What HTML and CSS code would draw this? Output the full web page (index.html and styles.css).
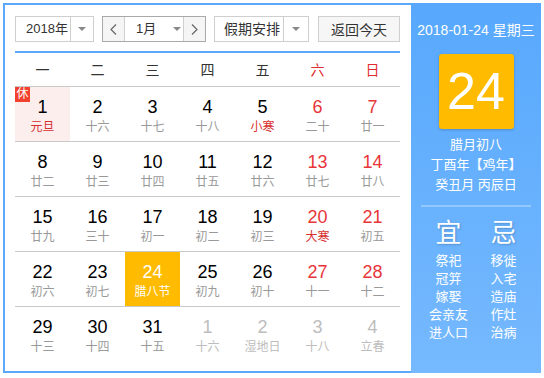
FILE: index.html
```html
<!DOCTYPE html>
<html lang="zh-CN">
<head>
  <meta charset="UTF-8">
  <meta name="viewport" content="width=device-width, initial-scale=1.0">
  <title>万年历</title>
  <link rel="stylesheet" href="styles.css">
</head>
<body>

  <div class="calendar">
    <div class="main">
      <div class="toolbar">
        <div class="select year-select">
          <span class="select-text">2018年</span>
          <span class="select-arrow"><i class="caret"></i></span>
        </div>
        <div class="month-group">
          <span class="nav-btn">
            <svg width="7" height="11" viewBox="0 0 7 11"><polyline points="6,0.5 1,5.5 6,10.5" fill="none" stroke="#666" stroke-width="1.2"/></svg>
          </span>
          <span class="month-text">1月</span>
          <span class="month-arrow"><i class="caret"></i></span>
          <span class="nav-btn next">
            <svg width="7" height="11" viewBox="0 0 7 11"><polyline points="1,0.5 6,5.5 1,10.5" fill="none" stroke="#666" stroke-width="1.2"/></svg>
          </span>
        </div>
        <div class="select holiday-select">
          <span class="select-text">假期安排</span>
          <span class="select-arrow"><i class="caret"></i></span>
        </div>
        <button type="button" class="today-button">返回今天</button>
      </div>

      <div class="weekdays">
        <span>一</span><span>二</span><span>三</span><span>四</span><span>五</span>
        <span class="weekend">六</span><span class="weekend">日</span>
      </div>

      <div class="days">
        <div class="week">
          <div class="day holiday"><span class="rest-badge">休</span><b>1</b><em class="festival">元旦</em></div>
          <div class="day"><b>2</b><em>十六</em></div>
          <div class="day"><b>3</b><em>十七</em></div>
          <div class="day"><b>4</b><em>十八</em></div>
          <div class="day"><b>5</b><em class="festival">小寒</em></div>
          <div class="day weekend"><b>6</b><em>二十</em></div>
          <div class="day weekend"><b>7</b><em>廿一</em></div>
        </div>
        <div class="week">
          <div class="day"><b>8</b><em>廿二</em></div>
          <div class="day"><b>9</b><em>廿三</em></div>
          <div class="day"><b>10</b><em>廿四</em></div>
          <div class="day"><b>11</b><em>廿五</em></div>
          <div class="day"><b>12</b><em>廿六</em></div>
          <div class="day weekend"><b>13</b><em>廿七</em></div>
          <div class="day weekend"><b>14</b><em>廿八</em></div>
        </div>
        <div class="week">
          <div class="day"><b>15</b><em>廿九</em></div>
          <div class="day"><b>16</b><em>三十</em></div>
          <div class="day"><b>17</b><em>初一</em></div>
          <div class="day"><b>18</b><em>初二</em></div>
          <div class="day"><b>19</b><em>初三</em></div>
          <div class="day weekend"><b>20</b><em class="festival">大寒</em></div>
          <div class="day weekend"><b>21</b><em>初五</em></div>
        </div>
        <div class="week">
          <div class="day"><b>22</b><em>初六</em></div>
          <div class="day"><b>23</b><em>初七</em></div>
          <div class="day today"><b>24</b><em>腊八节</em></div>
          <div class="day"><b>25</b><em>初九</em></div>
          <div class="day"><b>26</b><em>初十</em></div>
          <div class="day weekend"><b>27</b><em>十一</em></div>
          <div class="day weekend"><b>28</b><em>十二</em></div>
        </div>
        <div class="week">
          <div class="day"><b>29</b><em>十三</em></div>
          <div class="day"><b>30</b><em>十四</em></div>
          <div class="day"><b>31</b><em>十五</em></div>
          <div class="day other"><b>1</b><em>十六</em></div>
          <div class="day other"><b>2</b><em>湿地日</em></div>
          <div class="day other"><b>3</b><em>十八</em></div>
          <div class="day other"><b>4</b><em>立春</em></div>
        </div>
      </div>
    </div>

    <div class="side">
      <div class="side-date">2018-01-24 星期三</div>
      <div class="big-day">24</div>
      <div class="lunar">
        <p>腊月初八</p>
        <p>丁酉年【鸡年】</p>
        <p>癸丑月 丙辰日</p>
      </div>
      <div class="side-divider"></div>
      <div class="almanac">
        <div class="almanac-col">
          <h3>宜</h3>
          <p>祭祀</p>
          <p>冠笄</p>
          <p>嫁娶</p>
          <p>会亲友</p>
          <p>进人口</p>
        </div>
        <div class="almanac-col">
          <h3>忌</h3>
          <p>移徙</p>
          <p>入宅</p>
          <p>造庙</p>
          <p>作灶</p>
          <p>治病</p>
        </div>
      </div>
    </div>
  </div>

</body>
</html>
```

FILE: styles.css
```css
body {
  margin: 3px;
  font-family: "Liberation Sans", "Noto Sans CJK SC", sans-serif;
  color: #333;
}
.calendar {
  display: flex;
  width: 538px;
  height: 370px;
}
.main {
  width: 385px;
  padding: 11px 11px 0 10px;
  border: 2px solid #5aa7fc;
  border-right: none;
}

/* toolbar */
.toolbar {
  display: flex;
  height: 26px;
  padding-bottom: 9px;
  border-bottom: 2px solid #5aa7fc;
}
.select {
  display: flex;
  height: 24px;
  border: 1px solid #cfcfcf;
  background-color: #fff;
  font-size: 14px;
  line-height: 24px;
  white-space: nowrap;
}
.select-text {
  flex: 1;
  padding-left: 10px;
}
.select-arrow {
  display: flex;
  align-items: center;
  justify-content: center;
  width: 24px;
  border-left: 1px solid #cfcfcf;
}
.caret {
  width: 0;
  height: 0;
  border-left: 4px solid transparent;
  border-right: 4px solid transparent;
  border-top: 4px solid #888;
}
.year-select {
  width: 77px;
  font-size: 13px;
}
.year-select .select-arrow {
  width: 22px;
}
.month-group {
  display: flex;
  width: 102px;
  height: 24px;
  margin-left: 8px;
  border: 1px solid #a9a9a9;
  font-size: 13px;
  line-height: 24px;
  white-space: nowrap;
}
.nav-btn {
  display: flex;
  align-items: center;
  justify-content: center;
  width: 21px;
  background-color: #f5f5f5;
  border-right: 1px solid #cfcfcf;
}
.nav-btn.next {
  border-right: none;
  border-left: 1px solid #cfcfcf;
}
.month-text {
  width: 37px;
  padding-left: 11px;
}
.month-arrow {
  display: flex;
  align-items: center;
  width: 10px;
}
.holiday-select {
  width: 93px;
  margin-left: 8px;
}
.holiday-select .select-text {
  padding-left: 9px;
}
.today-button {
  width: 82px;
  height: 26px;
  margin-left: 9px;
  padding: 0;
  border: 1px solid #cfcfcf;
  border-radius: 0;
  background-color: #f6f6f6;
  font-family: inherit;
  font-size: 14px;
  color: #333;
}

/* weekday header */
.weekdays {
  display: grid;
  grid-template-columns: repeat(7, 55px);
  height: 33px;
  border-bottom: 1px solid #c9c9c9;
  font-size: 14px;
  line-height: 34px;
  text-align: center;
}
.weekdays .weekend {
  color: #e12d2d;
}

/* day grid */
.week {
  display: grid;
  grid-template-columns: repeat(7, 55px);
  border-bottom: 1px solid #c9c9c9;
}
.week:last-child {
  border-bottom: none;
}
.day {
  position: relative;
  height: 44px;
  padding-top: 10px;
  text-align: center;
}
.day b {
  display: block;
  font-size: 18px;
  font-weight: normal;
  line-height: 20px;
  color: #000;
}
.day em {
  display: block;
  font-style: normal;
  font-size: 12px;
  line-height: 20px;
  color: #999;
}
.day.weekend b {
  color: #e8353a;
}
.day em.festival {
  color: #d62f2f;
}
.day.holiday {
  background-color: #fdeeee;
}
.day.today {
  background-color: #ffbb00;
}
.day.today b,
.day.today em {
  color: #fff;
}
.day.other b,
.day.other em {
  color: #bdbdbd;
}
.rest-badge {
  position: absolute;
  top: 0;
  left: 0;
  width: 15px;
  height: 15px;
  background-color: #f2412f;
  color: #fff;
  font-size: 12px;
  line-height: 15px;
  text-align: center;
}

/* side panel */
.side {
  width: 130px;
  background: linear-gradient(#57a8fd, #76b9fe);
  color: #fff;
  text-align: center;
}
.side-date {
  margin-top: 17px;
  font-size: 14px;
  line-height: 20px;
}
.big-day {
  width: 75px;
  height: 75px;
  margin: 14px auto 0;
  border-radius: 3px;
  background-color: #ffbb00;
  box-shadow: 0 1px 3px rgba(0, 0, 0, 0.2);
  font-size: 52px;
  line-height: 75px;
}
.lunar {
  margin-top: 6px;
  font-size: 13px;
  line-height: 20px;
}
.lunar p {
  margin: 0;
}
.side-divider {
  height: 2px;
  margin: 10px 10px 0;
  background-color: rgba(255, 255, 255, 0.3);
}
.almanac {
  display: flex;
  margin: 11px 10px 0;
}
.almanac-col {
  width: 55px;
}
.almanac h3 {
  margin: 0 0 4px;
  font-size: 26px;
  font-weight: normal;
  line-height: 30px;
  text-shadow: 1px 1px 2px rgba(0, 0, 0, 0.2);
}
.almanac p {
  margin: 0;
  font-size: 13px;
  line-height: 18px;
}
```
